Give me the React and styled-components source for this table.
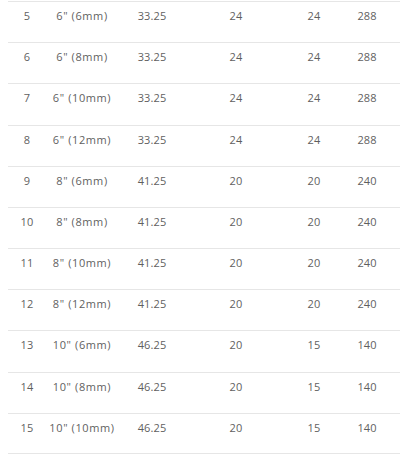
import React from "react";
import styled, { createGlobalStyle } from "styled-components";

const Global = createGlobalStyle`
  html, body { margin: 0; padding: 0; background: #fff; }
  body { margin: 0 0 0 8px; font-family: "Open Sans", "DejaVu Sans", sans-serif; }
`;

const Table = styled.div`
  width: 392px;
  padding-top: 1px;
`;

const Row = styled.div`
  display: grid;
  grid-template-columns: 38px 72px 68px 100px 56px 50px 8px;
  height: 41.18px;
  box-sizing: border-box;
  border-top: 1px solid #e6e6e6;
  border-bottom: ${(p) => (p.$last ? "1px solid #e6e6e6" : "none")};
  padding-top: 6px;
  font-size: 11px;
  line-height: 15px;
  color: #5f5f5f;
`;

const Cell = styled.div`
  text-align: center;
  white-space: nowrap;
  letter-spacing: ${(p) => (p.$wide ? "0.6px" : "0.1px")};
`;

const rows = [
  [5, '6" (6mm)', "33.25", 24, 24, 288],
  [6, '6" (8mm)', "33.25", 24, 24, 288],
  [7, '6" (10mm)', "33.25", 24, 24, 288],
  [8, '6" (12mm)', "33.25", 24, 24, 288],
  [9, '8" (6mm)', "41.25", 20, 20, 240],
  [10, '8" (8mm)', "41.25", 20, 20, 240],
  [11, '8" (10mm)', "41.25", 20, 20, 240],
  [12, '8" (12mm)', "41.25", 20, 20, 240],
  [13, '10" (6mm)', "46.25", 20, 15, 140],
  [14, '10" (8mm)', "46.25", 20, 15, 140],
  [15, '10" (10mm)', "46.25", 20, 15, 140],
];

export default function App() {
  return (
    <>
      <Global />
      <Table>
        {rows.map((r, i) => (
          <Row key={r[0]} $last={i === rows.length - 1}>
            {r.map((c, j) => (
              <Cell key={j} $wide={j === 1}>{c}</Cell>
            ))}
            <Cell />
          </Row>
        ))}
      </Table>
    </>
  );
}
